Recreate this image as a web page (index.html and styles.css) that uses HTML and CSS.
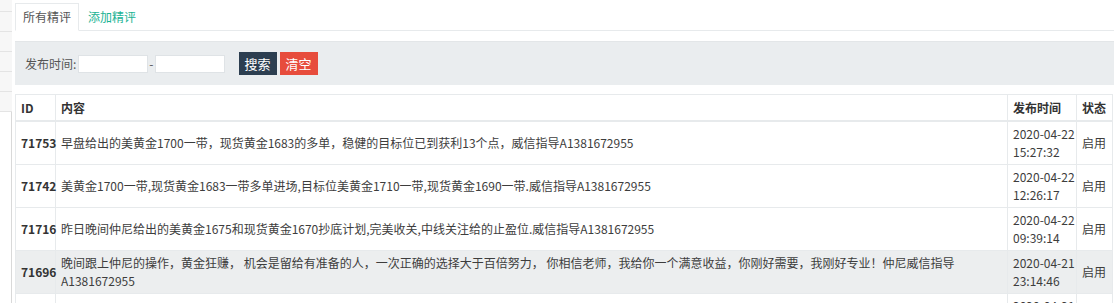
FILE: index.html
```html
<!DOCTYPE html>
<html lang="zh-CN">
<head>
<meta charset="utf-8">
<title>所有精评</title>
<link rel="stylesheet" href="styles.css">
</head>
<body>
<div class="frame">
  <aside class="side">
    <div class="side-item first"></div>
    <div class="side-item"></div>
    <div class="side-item"></div>
    <div class="side-item"></div>
    <div class="side-item"></div>
    <div class="side-item"></div>
    <div class="side-rest"></div>
  </aside>
  <main class="main">
    <nav class="tabs">
      <a class="tab active">所有精评</a>
      <a class="tab link">添加精评</a>
    </nav>
    <form class="search">
      <label class="lbl">发布时间:</label>
      <input class="inp" type="text">
      <span class="dash">-</span>
      <input class="inp" type="text">
      <button type="button" class="btn btn-dark">搜索</button>
      <button type="button" class="btn btn-red">清空</button>
    </form>
    <table class="grid">
      <colgroup>
        <col class="c-id"><col><col class="c-date"><col class="c-st">
      </colgroup>
      <thead>
        <tr><th>ID</th><th>内容</th><th>发布时间</th><th>状态</th></tr>
      </thead>
      <tbody>
        <tr>
          <td class="id">71753</td>
          <td>早盘给出的美黄金1700一带，现货黄金1683的多单，稳健的目标位已到获利13个点，威信指导A1381672955</td>
          <td class="date"><span>2020-04-22</span><span>15:27:32</span></td>
          <td>启用</td>
        </tr>
        <tr>
          <td class="id">71742</td>
          <td>美黄金1700一带,现货黄金1683一带多单进场,目标位美黄金1710一带,现货黄金1690一带.威信指导A1381672955</td>
          <td class="date"><span>2020-04-22</span><span>12:26:17</span></td>
          <td>启用</td>
        </tr>
        <tr>
          <td class="id">71716</td>
          <td>昨日晚间仲尼给出的美黄金1675和现货黄金1670抄底计划,完美收关,中线关注给的止盈位.威信指导A1381672955</td>
          <td class="date"><span>2020-04-22</span><span>09:39:14</span></td>
          <td>启用</td>
        </tr>
        <tr class="hover">
          <td class="id">71696</td>
          <td>晚间跟上仲尼的操作，黄金狂赚， 机会是留给有准备的人，一次正确的选择大于百倍努力， 你相信老师，我给你一个满意收益，你刚好需要，我刚好专业！仲尼威信指导A1381672955</td>
          <td class="date"><span>2020-04-21</span><span>23:14:46</span></td>
          <td>启用</td>
        </tr>
        <tr>
          <td class="id">71690</td>
          <td>美黄金1680一带多单进场,目标位美黄金1700一带.威信指导A1381672955</td>
          <td class="date"><span>2020-04-21</span><span>21:05:33</span></td>
          <td>启用</td>
        </tr>
      </tbody>
    </table>
  </main>
</div>
</body>
</html>
```

FILE: styles.css
```css
* { box-sizing: border-box; }

html, body {
  margin: 0;
  padding: 0;
  background: #fff;
  overflow: hidden;
}

body {
  font-family: "Noto Sans CJK SC", "Noto Sans", sans-serif;
  font-size: 12px;
  line-height: 18px;
  color: #3d3d3d;
}

.frame {
  display: flex;
  min-height: 303px;
}

.side {
  width: 12px;
  flex: 0 0 12px;
  display: flex;
  flex-direction: column;
}

.side-item {
  height: 20px;
  background: #f7f7f7;
  border-bottom: 1px solid #e4e4e4;
}

.side-item.first {
  height: 12px;
}

.side-rest {
  flex: 1;
  border-right: 1px solid #d9d9d9;
}

.main {
  flex: 1;
  margin-left: 3px;
  padding-top: 3px;
  min-width: 0;
}

.tabs {
  display: flex;
  border-bottom: 1px solid #e7eaec;
}

.tab {
  display: block;
  padding: 4px 7px;
  margin-right: 1px;
  margin-bottom: -1px;
  border: 1px solid transparent;
  color: #555;
  text-decoration: none;
}

.tab.active {
  border-color: #e7eaec;
  border-bottom-color: #fff;
  background: #fff;
}

.tab.link {
  color: #1ab394;
}

.search {
  margin: 10px 0 0;
  padding: 10px;
  background: #eaedef;
  display: flex;
  align-items: center;
  border-top: 1px solid #e3e6e8;
}

.lbl {
  color: #555;
  margin-right: 2px;
}

.inp {
  width: 70px;
  height: 18px;
  padding: 0 3px;
  border: 1px solid #dfe3e6;
  background: #fff;
  font: inherit;
  outline: none;
}

.dash {
  padding: 0 1px;
  color: #555;
}

.btn {
  height: 23px;
  padding: 0 6px;
  border: 0;
  color: #fff;
  font-family: inherit;
  font-size: 13px;
  line-height: 23px;
  cursor: pointer;
}

.btn-dark {
  background: #2c3e50;
  margin-left: 14px;
}

.btn-red {
  background: #e74c3c;
  margin-left: 3px;
}

.grid {
  width: calc(100% - 1px);
  margin-top: 9px;
  border-collapse: collapse;
  table-layout: fixed;
}

.c-id { width: 40px; }
.c-date { width: 69px; }
.c-st { width: 36px; }

.grid th,
.grid td {
  border: 1px solid #e7eaec;
  padding: 3px 5px;
  text-align: left;
  vertical-align: middle;
}

.grid th {
  padding: 4px 5px 3px;
  border-bottom: 2px solid #e7eaec;
  font-weight: bold;
  color: #333;
}

.grid td.id {
  font-weight: bold;
  color: #333;
}

.grid td.date span {
  display: block;
  white-space: nowrap;
}

.grid tr.hover td {
  background: #eceeef;
}
```
